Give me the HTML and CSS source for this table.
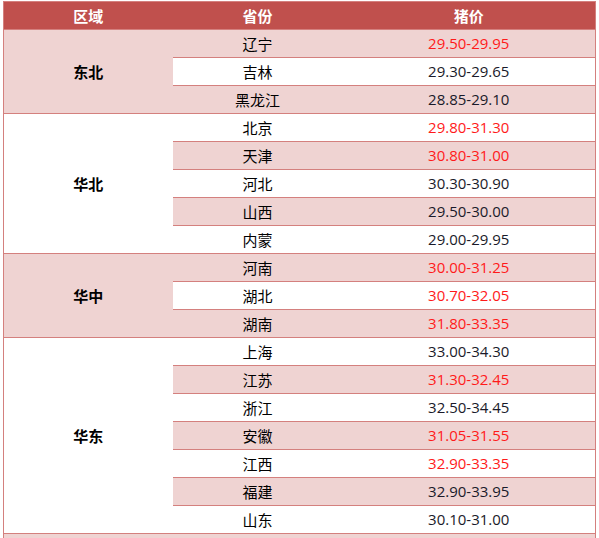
FILE: index.html
```html
<!DOCTYPE html>
<html lang="zh">
<head>
<meta charset="utf-8">
<link rel="stylesheet" href="styles.css">
</head>
<body>
<table class="price-table">
  <colgroup>
    <col class="c-region">
    <col class="c-prov">
    <col class="c-price">
  </colgroup>
  <thead>
    <tr><th>区域</th><th>省份</th><th>猪价</th></tr>
  </thead>
  <tbody>
    <tr class="odd group-start"><td class="region" rowspan="3">东北</td><td class="prov">辽宁</td><td class="price up">29.50-29.95</td></tr>
    <tr class="even"><td class="prov">吉林</td><td class="price">29.30-29.65</td></tr>
    <tr class="odd"><td class="prov">黑龙江</td><td class="price">28.85-29.10</td></tr>

    <tr class="even group-start"><td class="region" rowspan="5">华北</td><td class="prov">北京</td><td class="price up">29.80-31.30</td></tr>
    <tr class="odd"><td class="prov">天津</td><td class="price up">30.80-31.00</td></tr>
    <tr class="even"><td class="prov">河北</td><td class="price">30.30-30.90</td></tr>
    <tr class="odd"><td class="prov">山西</td><td class="price">29.50-30.00</td></tr>
    <tr class="even"><td class="prov">内蒙</td><td class="price">29.00-29.95</td></tr>

    <tr class="odd group-start"><td class="region" rowspan="3">华中</td><td class="prov">河南</td><td class="price up">30.00-31.25</td></tr>
    <tr class="even"><td class="prov">湖北</td><td class="price up">30.70-32.05</td></tr>
    <tr class="odd"><td class="prov">湖南</td><td class="price up">31.80-33.35</td></tr>

    <tr class="even group-start"><td class="region" rowspan="7">华东</td><td class="prov">上海</td><td class="price">33.00-34.30</td></tr>
    <tr class="odd"><td class="prov">江苏</td><td class="price up">31.30-32.45</td></tr>
    <tr class="even"><td class="prov">浙江</td><td class="price">32.50-34.45</td></tr>
    <tr class="odd"><td class="prov">安徽</td><td class="price up">31.05-31.55</td></tr>
    <tr class="even"><td class="prov">江西</td><td class="price up">32.90-33.35</td></tr>
    <tr class="odd"><td class="prov">福建</td><td class="price">32.90-33.95</td></tr>
    <tr class="even"><td class="prov">山东</td><td class="price">30.10-31.00</td></tr>

    <tr class="odd group-start"><td class="region"></td><td class="prov"></td><td class="price"></td></tr>
  </tbody>
</table>
</body>
</html>
```

FILE: styles.css
```css
html, body {
  margin: 0;
  padding: 0;
  background: #ffffff;
}

body {
  padding: 1px 0 0 3px;
}

.price-table {
  border-collapse: collapse;
  table-layout: fixed;
  width: 592px;
  border: 1px solid #d4807e;
  font-family: "Noto Sans CJK SC", "Open Sans", sans-serif;
  font-size: 15px;
  color: #111111;
}

.c-region { width: 169px; }
.c-prov { width: 170px; }
.c-price { width: 253px; }

.price-table th {
  height: 27px;
  padding: 0;
  background: #c0504d;
  color: #ffffff;
  font-weight: bold;
  font-size: 15px;
  text-align: center;
  border-bottom: 1px solid #d4807e;
  line-height: 27px;
}

.price-table td {
  height: 27px;
  padding: 0;
  text-align: center;
  line-height: 27px;
  border-top: 1px solid #d4807e;
}

.price-table tr.odd td { background: #efd3d2; }
.price-table tr.even td { background: #ffffff; }

.price-table td.region {
  font-weight: bold;
  color: #000000;
}

.price-table td.prov {
  color: #000000;
}

.price-table td.price {
  font-family: "Open Sans", "Noto Sans", sans-serif;
  font-size: 15px;
  color: #1a1a2a;
}

.price-table td.price.up {
  color: #ff1a1a;
}
```
